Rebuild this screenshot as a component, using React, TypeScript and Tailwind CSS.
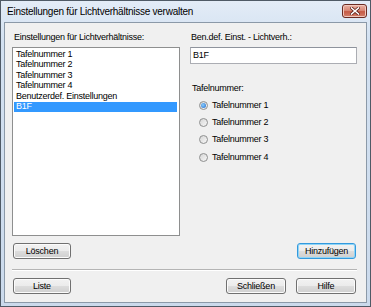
import React from "react";

const FONT = "font-['Liberation_Sans',Arial,sans-serif]";

const ITEMS = [
  "Tafelnummer 1",
  "Tafelnummer 2",
  "Tafelnummer 3",
  "Tafelnummer 4",
  "Benutzerdef. Einstellungen",
  "B1F",
];

const RADIOS = ["Tafelnummer 1", "Tafelnummer 2", "Tafelnummer 3", "Tafelnummer 4"];

function WinButton({
  label,
  width,
  focused = false,
}: {
  label: string;
  width: string;
  focused?: boolean;
}) {
  return (
    <div
      className={
        "flex h-[16px] items-center justify-center rounded-[3px] border bg-[linear-gradient(to_bottom,#f2f2f2_0%,#ebebeb_50%,#dddddd_50%,#cfcfcf_100%)] text-[9px] leading-none tracking-[-0.25px] text-black " +
        width +
        (focused
          ? " border-[#3399dd] shadow-[inset_0_0_0_1px_#8fd5f7]"
          : " border-[#707070] shadow-[inset_0_0_0_1px_#fbfbfb]")
      }
    >
      {label}
    </div>
  );
}

function Radio({ checked }: { checked: boolean }) {
  return (
    <div className="flex h-[9px] w-[9px] items-center justify-center rounded-full border border-[#8e8f8f] bg-[linear-gradient(135deg,#d6d6d6,#f7f7f7)]">
      {checked && (
        <div className="h-[5px] w-[5px] rounded-full bg-[radial-gradient(circle_at_40%_40%,#8ad0ff,#1f64c8)]" />
      )}
    </div>
  );
}

export default function App() {
  return (
    <div className={"h-[307px] w-[371px] bg-white " + FONT}>
      <div className="flex h-[307px] w-[371px] flex-col border border-[#4f5a66] bg-[linear-gradient(to_bottom,#e3ecf7,#d3e1f1_40px,#cbdaec)]">
        {/* title bar */}
        <div className="flex h-[21px] items-start">
          <div className="pl-[6px] pt-[4px] text-[10px] leading-[14px] tracking-[-0.25px] text-black">
            Einstellungen für Lichtverhältnisse verwalten
          </div>
          <div className="ml-auto mr-[3px] mt-[3px] flex h-[14px] w-[25px] items-center justify-center rounded-[3px] border border-[#6b2b22] bg-[linear-gradient(to_bottom,#eab0a2_0%,#d98a78_45%,#c65a45_55%,#d2806b_100%)] shadow-[inset_0_0_0_1px_#f1c8bd]">
            <svg width="10" height="8" viewBox="0 0 10 8">
              <path d="M1.5 1 L8.5 7 M8.5 1 L1.5 7" stroke="#5a1d16" strokeWidth="3" strokeLinecap="square" />
              <path d="M1.5 1 L8.5 7 M8.5 1 L1.5 7" stroke="#ffffff" strokeWidth="1.6" strokeLinecap="square" />
            </svg>
          </div>
        </div>

        {/* client area */}
        <div className="mx-[3px] mb-[3px] flex flex-1 flex-col border border-[#8b99a8] bg-[#f0f0f0] text-[9px] tracking-[-0.25px] text-black">
          <div className="flex gap-[10px] pl-[7px] pt-[9px]">
            {/* left column */}
            <div className="flex w-[168px] flex-col">
              <div className="h-[10px] pl-[2px] leading-[10px]">Einstellungen für Lichtverhältnisse:</div>
              <div className="mt-[5px] h-[189px] border border-[#8e8f8f] bg-white pl-[1px] pr-[2px] pt-[1px]">
                {ITEMS.map((item) => (
                  <div
                    key={item}
                    className={
                      "flex h-[10.5px] items-center pl-[2px] leading-none " +
                      (item === "B1F" ? "bg-[#3399ff] text-white" : "")
                    }
                  >
                    {item}
                  </div>
                ))}
              </div>
            </div>

            {/* right column */}
            <div className="flex w-[167px] flex-col">
              <div className="h-[10px] pl-[1px] leading-[10px]">Ben.def. Einst. - Lichtverh.:</div>
              <div className="mt-[5px] flex h-[17px] items-start border border-[#abadb3] border-t-[#8e939c] bg-white pl-[2px] pt-[2px] leading-[10px]">
                B1F
              </div>
              <div className="mt-[19px] h-[10px] pl-[2px] leading-[10px]">Tafelnummer:</div>
              <div className="mt-[3.5px] flex flex-col pl-[9px]">
                {RADIOS.map((r, i) => (
                  <div key={r} className="flex h-[17.4px] items-center gap-[4px]">
                    <Radio checked={i === 0} />
                    <span className="leading-none">{r}</span>
                  </div>
                ))}
              </div>
            </div>
          </div>

          {/* button row */}
          <div className="mt-[7px] flex pl-[8px] pr-[10px]">
            <WinButton label="Löschen" width="w-[58px]" />
            <div className="ml-auto">
              <WinButton label="Hinzufügen" width="w-[59px]" focused />
            </div>
          </div>

          <div className="ml-[7px] mt-[10px] h-[2px] w-[345px] border-t border-b border-t-[#b4b4b4] border-b-white" />

          <div className="mt-[7px] flex pl-[8px] pr-[10px]">
            <WinButton label="Liste" width="w-[58px]" />
            <div className="ml-auto flex gap-[10px]">
              <WinButton label="Schließen" width="w-[60px]" />
              <WinButton label="Hilfe" width="w-[60px]" />
            </div>
          </div>
        </div>
      </div>
    </div>
  );
}
